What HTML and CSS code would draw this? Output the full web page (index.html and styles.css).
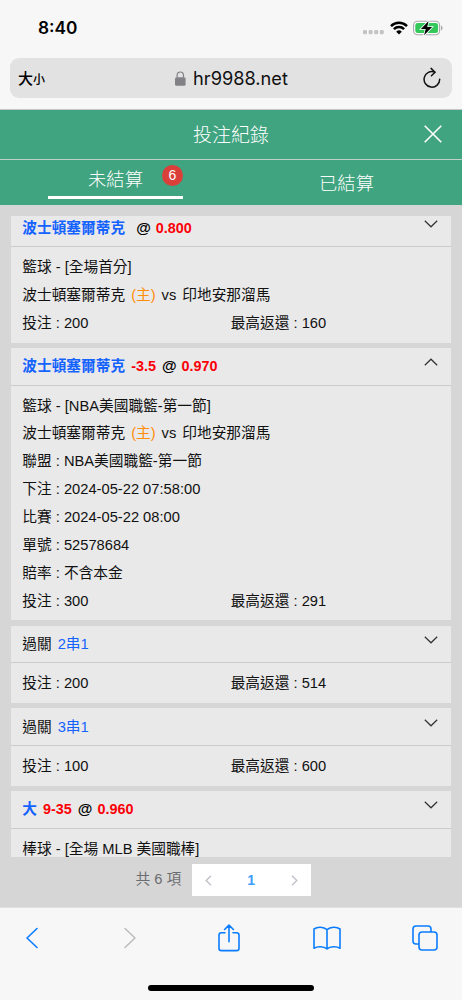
FILE: index.html
```html
<!DOCTYPE html>
<html lang="zh-Hant">
<head>
<meta charset="utf-8">
<title>投注紀錄</title>
<link rel="stylesheet" href="styles.css">
</head>
<body>
<div class="phone">
  <header class="browser-top">
    <div class="status">
      <span class="time">8:40</span>
      <div class="status-icons">
        <svg width="21" height="5" viewBox="0 0 21 5" fill="#c4c4c6"><rect x="0" y="0" width="4" height="4.2" rx="1.3"/><rect x="5.6" y="0" width="4" height="4.2" rx="1.3"/><rect x="11.2" y="0" width="4" height="4.2" rx="1.3"/><rect x="16.8" y="0" width="4" height="4.2" rx="1.3"/></svg>
        <svg class="wifi" width="18" height="14" viewBox="0 0 18 14"><g fill="none" stroke="#000" stroke-width="2.5"><path d="M1 5.1a11.4 11.4 0 0 1 16 0"/><path d="M3.9 8.2a7.3 7.3 0 0 1 10.2 0"/></g><path d="M9 13.5 6.2 10.7a4 4 0 0 1 5.6 0z"/></svg>
        <svg class="battery" width="30" height="16" viewBox="0 0 30 16"><rect x=".6" y="1.2" width="26" height="13.6" rx="4" fill="#fff" stroke="#a8a8aa" stroke-width="1.1"/><rect x="2.3" y="2.9" width="22.8" height="10.2" rx="2.4" fill="#34c759"/><path d="M28 5.5q1.6.6 1.6 2.5T28 10.5z" fill="#a8a8aa"/><path d="M15.6 1 7.9 8.9h4.8l-1.6 6.4 8-8.3h-4.9z" fill="#000" stroke="#fff" stroke-width="1.6" paint-order="stroke"/></svg>
      </div>
    </div>
    <div class="address">
      <span class="text-size">大<small>小</small></span>
      <span class="site">
        <svg width="11" height="15" viewBox="0 0 11 15"><rect x="0" y="6.2" width="10.6" height="8.6" rx="1.6" fill="#828286"/><path d="M2.1 6.5V4.2a3.2 3.2 0 0 1 6.4 0v2.3" fill="none" stroke="#828286" stroke-width="1.2"/></svg>
        hr9988.net
      </span>
      <svg class="reload" width="18" height="22" viewBox="0 0 18 22" fill="none" stroke="#111" stroke-width="1.5" stroke-linecap="round" stroke-linejoin="round"><path d="M16.7 12.2A7.8 7.8 0 1 1 11.8 5.1"/><path d="M8.1 1.4 12 5.2 8.4 8.7"/></svg>
    </div>
  </header>

  <div class="titlebar">
    <h1>投注紀錄</h1>
    <svg class="close" width="18" height="18" viewBox="0 0 18 18" stroke="#fff" stroke-width="1.6"><path d="M.7.7l16.6 16.6M17.3.7.7 17.3"/></svg>
  </div>
  <nav class="tabs">
    <div class="tab"><div class="tab-active">未結算<span class="badge">6</span></div></div>
    <div class="tab">已結算</div>
  </nav>

  <main class="content">
    <div class="list">
      <section class="card">
        <div class="card-head"><b class="blue">波士頓塞爾蒂克</b><b class="at at-wide">@</b><b class="red">0.800</b>
          <svg class="chev" width="14" height="8" viewBox="0 0 14 8"><path d="M.8.8 7 6.8 13.2.8"/></svg></div>
        <div class="card-body">
          <p>籃球 - [全場首分]</p>
          <p>波士頓塞爾蒂克<span class="home">(主)</span>vs<span class="away">印地安那溜馬</span></p>
          <div class="pair"><p>投注 : 200</p><p>最高返還 : 160</p></div>
        </div>
      </section>
      <section class="card">
        <div class="card-head"><b class="blue">波士頓塞爾蒂克</b><b class="red">-3.5</b><b class="at">@</b><b class="red">0.970</b>
          <svg class="chev" width="14" height="8" viewBox="0 0 14 8"><path d="M.8 7.2 7 1.2l6.2 6"/></svg></div>
        <div class="card-body">
          <p>籃球 - [NBA美國職籃-第一節]</p>
          <p>波士頓塞爾蒂克<span class="home">(主)</span>vs<span class="away">印地安那溜馬</span></p>
          <p>聯盟 : NBA美國職籃-第一節</p>
          <p>下注 : 2024-05-22 07:58:00</p>
          <p>比賽 : 2024-05-22 08:00</p>
          <p>單號 : 52578684</p>
          <p>賠率 : 不含本金</p>
          <div class="pair"><p>投注 : 300</p><p>最高返還 : 291</p></div>
        </div>
      </section>
      <section class="card">
        <div class="card-head"><span>過關</span><span class="blue">2串1</span>
          <svg class="chev" width="14" height="8" viewBox="0 0 14 8"><path d="M.8.8 7 6.8 13.2.8"/></svg></div>
        <div class="card-body">
          <div class="pair"><p>投注 : 200</p><p>最高返還 : 514</p></div>
        </div>
      </section>
      <section class="card">
        <div class="card-head"><span>過關</span><span class="blue">3串1</span>
          <svg class="chev" width="14" height="8" viewBox="0 0 14 8"><path d="M.8.8 7 6.8 13.2.8"/></svg></div>
        <div class="card-body">
          <div class="pair"><p>投注 : 100</p><p>最高返還 : 600</p></div>
        </div>
      </section>
      <section class="card">
        <div class="card-head"><b class="blue">大</b><b class="red">9-35</b><b class="at">@</b><b class="red">0.960</b>
          <svg class="chev" width="14" height="8" viewBox="0 0 14 8"><path d="M.8.8 7 6.8 13.2.8"/></svg></div>
        <div class="card-body">
          <p>棒球 - [全場 MLB 美國職棒]</p>
        </div>
      </section>
    </div>
    <div class="pager">
      <span class="total">共 6 項</span>
      <div class="pages">
        <svg width="7" height="11" viewBox="0 0 7 11"><path d="M6 .8 1.2 5.5 6 10.2"/></svg>
        <b>1</b>
        <svg width="7" height="11" viewBox="0 0 7 11"><path d="M1 .8 5.8 5.5 1 10.2"/></svg>
      </div>
    </div>
  </main>

  <footer class="toolbar">
    <div class="tools">
      <span><svg width="14" height="22" viewBox="0 0 14 22"><path d="M12 1.5 2 11l10 9.5"/></svg></span>
      <span><svg class="off" width="14" height="22" viewBox="0 0 14 22"><path d="M2 1.5 12 11 2 20.5"/></svg></span>
      <span><svg width="22" height="28" viewBox="0 0 22 28"><path d="M7 8.7H3.4Q1 8.7 1 11.1v13.1q0 2.400 2.400 2.400h15.200q2.400 0 2.400-2.400V11.100q0-2.400-2.400-2.400H15M11 17.700V1.200M6.600 5.500 11 1.100l4.400 4.400"/></svg></span>
      <span><svg width="28" height="24" viewBox="0 0 28 24"><path d="M14 3.700C10.500.7 4.600.5 1 3v19.200c3.500-2.200 10-2 13 .6 3-2.600 9.500-2.800 13-.6V3C23.400.5 17.500.7 14 3.700zV22.500"/></svg></span>
      <span><svg width="26" height="26" viewBox="0 0 26 26"><path d="M6.500 19H4q-3 0-3-3V4q0-3 3-3h12q3 0 3 3v2.500"/><rect x="7" y="7" width="18" height="18" rx="3"/></svg></span>
    </div>
    <div class="home-bar"></div>
  </footer>
</div>
</body>
</html>
```
FILE: styles.css
```css
* { box-sizing: border-box; }
body { margin: 0; font-family: "Liberation Sans", "Noto Sans CJK TC", sans-serif; color: #111; }
p, h1 { margin: 0; font-weight: 400; }
svg { display: block; flex: none; }
.phone { width: 462px; height: 1000px; display: flex; flex-direction: column; overflow: hidden; background: #d6d6d6; }

.browser-top { height: 110px; flex: none; padding: 17px 10px 0; background: #f7f7f7; border-bottom: 1px solid #c6c6c8; }
.status { height: 41px; display: flex; justify-content: space-between; padding: 0 9px 0 28px; }
.time { font: 600 17.3px/22px Inter, sans-serif; color: #000; }
.status-icons { display: flex; align-items: center; height: 21px; }
.status-icons > svg:first-child { margin-top: 9px; }
.wifi { margin: 0 5px 0 6px; }
.address { height: 40px; display: grid; grid-template-columns: 60px 1fr 60px; align-items: center; background: #e2e2e3; border-radius: 9px; padding: 0 11px 0 8px; }
.text-size { font: 500 15px/20px "Noto Sans CJK TC", sans-serif; color: #000; }
.text-size small { font-size: 12px; }
.site { display: flex; align-items: center; justify-content: center; gap: 7px; padding-left: 4px; font: 400 18.2px/24px Inter, sans-serif; color: #111; }
.reload { justify-self: end; }

.titlebar { height: 50px; flex: none; position: relative; background: #40a480; border-bottom: 1px solid #bfcfc9; display: flex; align-items: center; justify-content: center; }
.titlebar h1 { font-size: 19px; line-height: 28px; margin-top: -2px; color: #fff; font-weight: 300; font-family: "Noto Sans CJK TC", sans-serif; }
.close { position: absolute; right: 20px; top: 15px; }
.tabs { height: 45px; flex: none; display: grid; grid-template-columns: 1fr 1fr; background: #40a480; color: #fff; font: 300 18.3px/44px "Noto Sans CJK TC", sans-serif; text-align: center; }
.tab-active { position: relative; width: 135px; height: 39px; margin: 0 auto; line-height: 37px; border-bottom: 3px solid #fff; }
.badge { position: absolute; right: 0; top: 5px; width: 21px; height: 21px; border-radius: 50%; background: #da3f3a; font: 14px/21px "Liberation Sans", sans-serif; }

.content { flex: 1; min-height: 0; padding: 11px 11px 0; background: #d6d6d6; }
.list { height: 641px; overflow: hidden; font-size: 14.7px; }
.card { margin-bottom: 5.3px; background: #e9e9e9; }
.card:first-child { margin-top: -6.4px; }
.card-head { height: 37.7px; display: flex; align-items: center; gap: 6px; padding: 0 13px 0 11.3px; border-bottom: 1px solid #cbcbcb; white-space: nowrap; font-size: 14.7px; line-height: 22px; }
.card-head b { font-size: 14.4px; }
.card-head b.blue { font-size: 14.7px; }
.card-head b.at { font-size: 15px; margin-right: -1px; color: #000; }
.blue { color: #1463ff; }
.red { color: #fb0007; }
.card-head b.at-wide { margin-left: 5px; }
.chev { margin: 0 0 8px auto; fill: none; stroke: #333; stroke-width: 1.2; }
.card-body { padding: 6.9px 12px 5px 11.3px; line-height: 27.85px; white-space: nowrap; }
.pair { display: grid; grid-template-columns: 1fr 1fr; }
.home { color: #ff8d0a; margin: 0 6px; }
.away { margin-left: 6px; }

.pager { display: flex; align-items: center; gap: 10.5px; margin: 7px 0 0 124.5px; height: 32px; }
.total { font-size: 14.7px; line-height: 22px; margin-top: -2px; color: #6c6d70; white-space: nowrap; }
.pages { width: 119px; height: 32px; background: #fff; display: flex; align-items: center; justify-content: space-between; padding: 0 13px; }
.pages svg { fill: none; stroke: #bfc2c9; stroke-width: 1.4; }
.pages b { font-size: 14px; color: #409eff; }

.toolbar { height: 93px; flex: none; background: #f7f7f7; border-top: 1px solid #e0e0e0; }
.tools { height: 60px; display: flex; align-items: center; justify-content: space-between; padding: 0 23px 0 18px; }
.tools span { width: 28px; display: flex; justify-content: center; }
.tools svg { fill: none; stroke: #0a7cff; stroke-width: 1.6; stroke-linecap: round; stroke-linejoin: round; }
.tools svg.off { stroke: #bdbdbf; }
.home-bar { width: 166px; height: 6px; margin: 17px auto 0; border-radius: 3px; background: #000; }
```
